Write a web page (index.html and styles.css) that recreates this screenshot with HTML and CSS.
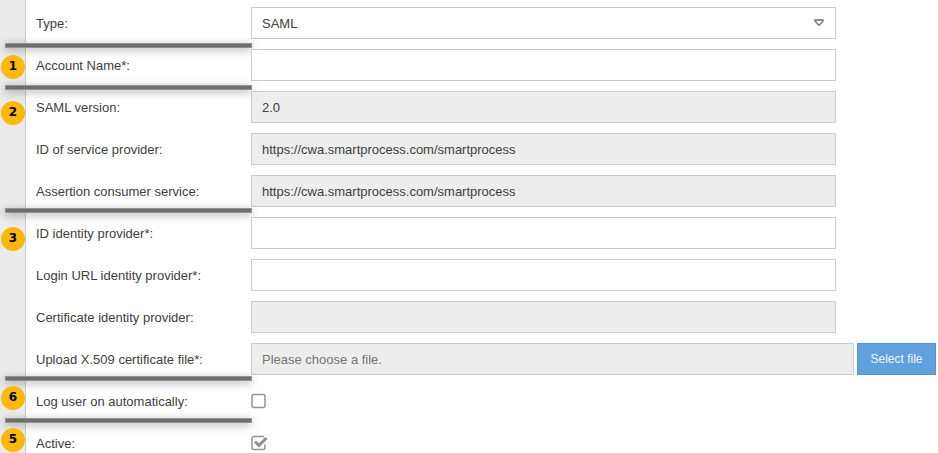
FILE: index.html
```html
<!DOCTYPE html>
<html lang="en">
<head>
  <meta charset="UTF-8">
  <title>SAML account</title>
  <link rel="stylesheet" href="styles.css">
</head>
<body>
  <form class="account-form">
    <div class="row">
      <label for="type">Type:</label>
      <div class="field select-field">
        <select id="type">
          <option>SAML</option>
        </select>
        <svg class="arrow" width="12" height="8" viewBox="0 0 12 8" aria-hidden="true">
          <path d="M2 1h8v1L6.500 6h-1L2 2z" fill="none" stroke="#8c8c8c" stroke-width="1.800" stroke-linejoin="round"/>
        </svg>
      </div>
    </div>
    <div class="row section">
      <span class="marker">1</span>
      <label for="account-name">Account Name*:</label>
      <div class="field"><input type="text" id="account-name"></div>
    </div>
    <div class="row section">
      <span class="marker marker-low">2</span>
      <label for="saml-version">SAML version:</label>
      <div class="field"><input type="text" id="saml-version" value="2.0" readonly></div>
    </div>
    <div class="row">
      <label for="service-provider">ID of service provider:</label>
      <div class="field"><input type="text" id="service-provider" value="https://cwa.smartprocess.com/smartprocess" readonly></div>
    </div>
    <div class="row">
      <label for="consumer-service">Assertion consumer service:</label>
      <div class="field"><input type="text" id="consumer-service" value="https://cwa.smartprocess.com/smartprocess" readonly></div>
    </div>
    <div class="row section section-high">
      <span class="marker marker-low">3</span>
      <label for="identity-provider">ID identity provider*:</label>
      <div class="field"><input type="text" id="identity-provider"></div>
    </div>
    <div class="row">
      <label for="login-url">Login URL identity provider*:</label>
      <div class="field"><input type="text" id="login-url"></div>
    </div>
    <div class="row">
      <label for="certificate">Certificate identity provider:</label>
      <div class="field"><input type="text" id="certificate" readonly></div>
    </div>
    <div class="row">
      <label for="certificate-file">Upload X.509 certificate file*:</label>
      <div class="field file-field">
        <input type="text" id="certificate-file" placeholder="Please choose a file." readonly>
        <button type="button">Select file</button>
      </div>
    </div>
    <div class="row section section-high">
      <span class="marker marker-high">6</span>
      <label for="auto-login">Log user on automatically:</label>
      <div class="field check-field">
        <input type="checkbox" id="auto-login">
        <svg width="17" height="16" viewBox="0 0 17 16" aria-hidden="true">
          <rect class="box" x="1" y="1.5" width="13" height="13" rx="2"/>
        </svg>
      </div>
    </div>
    <div class="row section section-high">
      <span class="marker marker-high">5</span>
      <label for="active">Active:</label>
      <div class="field check-field">
        <input type="checkbox" id="active" checked>
        <svg width="17" height="16" viewBox="0 0 17 16" aria-hidden="true">
          <path class="box" d="M14 9.5v3a2 2 0 0 1-2 2H3a2 2 0 0 1-2-2v-9a2 2 0 0 1 2-2h9l1 .3"/>
          <path class="tick" d="M4 6.5l4 4 7.5-7.5"/>
        </svg>
      </div>
    </div>
  </form>
</body>
</html>
```

FILE: styles.css
```css
* {
  box-sizing: border-box;
}
body {
  margin: 0;
  background: #fff;
  color: #404040;
  font-family: "Liberation Sans", Arial, sans-serif;
  font-size: 13px;
}
.account-form {
  display: flex;
  flex-direction: column;
  gap: 10px;
  height: 100vh;
  overflow: hidden;
  padding: 7px 2px 0 36px;
  background: linear-gradient(to right, #ebebeb 25px, #ccc 25px, #ccc 26px, #fff 26px);
}
.row {
  display: grid;
  grid-template-columns: 215px 1fr;
  align-items: center;
  flex: none;
  height: 32px;
  position: relative;
}
.field {
  display: flex;
  align-items: center;
  margin-right: 100px;
  position: relative;
}
input[type="text"],
select {
  flex: 1;
  min-width: 0;
  height: 32px;
  margin: 0;
  padding: 0 10px;
  border: 1px solid #ccc;
  border-radius: 0;
  background: #fff;
  color: #404040;
  font: inherit;
  appearance: none;
}
input[type="text"]:read-only {
  background: #ededed;
}
input::placeholder {
  color: #757575;
  opacity: 1;
}
.arrow {
  position: absolute;
  right: 11px;
  top: 12px;
  pointer-events: none;
}
.file-field {
  gap: 3px;
  margin-right: 0;
}
button {
  height: 32px;
  width: 79px;
  padding: 0;
  border: 1px solid #5094d4;
  background: #60a1dd;
  color: #f0f5fa;
  font-family: inherit;
  font-size: 12px;
}
.check-field input {
  position: absolute;
  left: 0;
  width: 16px;
  height: 16px;
  margin: 0;
  opacity: 0;
}
.box {
  fill: none;
  stroke: #949494;
  stroke-width: 1.5;
}
.tick {
  fill: none;
  stroke: #8f8f8f;
  stroke-width: 3;
}

/* numbered sections */
.section::before {
  content: "";
  box-sizing: border-box;
  position: absolute;
  left: -31px;
  top: -6px;
  width: 247px;
  height: 5px;
  border: 1px solid #919391;
  background: #6d6f6d;
  box-shadow: 0 2px 8px rgba(0, 0, 0, 0.35);
}
.section-high::before {
  top: -9px;
}
.marker {
  position: absolute;
  left: -35px;
  top: 6px;
  width: 24px;
  height: 24px;
  border-radius: 50%;
  background: #fdb90b;
  color: #000;
  font: bold 12px/23px "DejaVu Sans", Verdana, sans-serif;
  text-align: center;
}
.marker-low {
  top: 10px;
}
.marker-high {
  top: 1px;
}
```
